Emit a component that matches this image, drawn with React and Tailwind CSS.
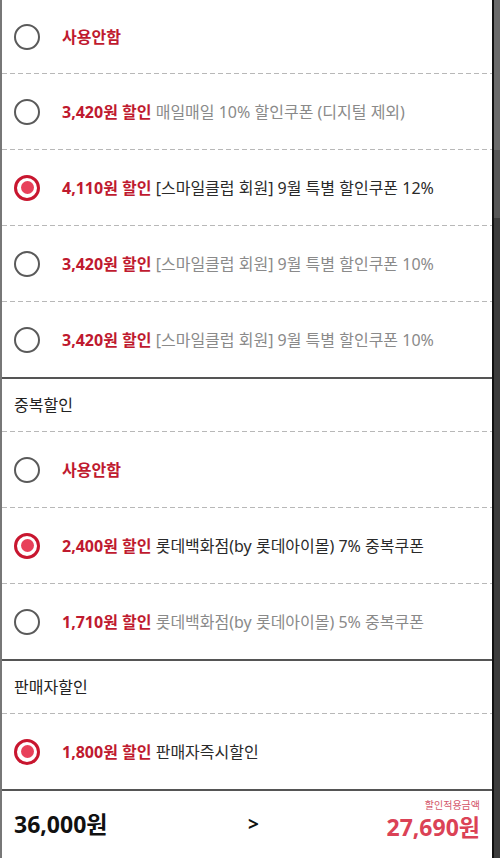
import React from "react";

const FONT = { fontFamily: '"Noto Sans", "Noto Sans CJK KR", sans-serif' };

function Radio({ on }) {
  if (on) {
    return (
      <div className="w-[26px] h-[26px] rounded-full border-[3px] border-[#c8162f] flex items-center justify-center shrink-0">
        <div className="w-[13px] h-[13px] rounded-full bg-[#e8405a]" />
      </div>
    );
  }
  return <div className="w-[26px] h-[26px] rounded-full border-[2.5px] border-[#5a5a5a] shrink-0" />;
}

const dashed =
  "bg-[repeating-linear-gradient(to_right,#b8b8b8_0_5px,transparent_5px_8px)] h-px";

function Row({ on, amount, desc, h = "h-[75px]", last }) {
  return (
    <div>
      <div className={`${h} flex items-center pl-[12px]`}>
        <Radio on={on} />
        <div className="ml-[22px] text-[16px] leading-none whitespace-nowrap">
          {amount ? (
            <>
              <span className="font-bold text-[#bf1a2f]">{amount}원 할인</span>{" "}
              <span className={on ? "text-[#2a2a2a]" : "text-[#8a8a8a]"}>{desc}</span>
            </>
          ) : (
            <span className="font-bold text-[#bf1a2f]">사용안함</span>
          )}
        </div>
      </div>
      {last ? <div className="h-[2px] bg-[#555]" /> : <div className={dashed} />}
    </div>
  );
}

function Header({ title }) {
  return (
    <div>
      <div className="h-[52px] flex items-center pl-[12px] text-[16px] text-[#222]">{title}</div>
      <div className={dashed} />
    </div>
  );
}

export default function App() {
  return (
    <div className="w-[500px] h-[858px] flex bg-white overflow-hidden" style={FONT}>
      <div className="w-[2px] bg-[#777]" />
      <div className="flex-1 flex flex-col">
        <Row h="h-[73px]" />
        <Row amount="3,420" desc="매일매일 10% 할인쿠폰 (디지털 제외)" />
        <Row on amount="4,110" desc="[스마일클럽 회원] 9월 특별 할인쿠폰 12%" />
        <Row amount="3,420" desc="[스마일클럽 회원] 9월 특별 할인쿠폰 10%" />
        <Row amount="3,420" desc="[스마일클럽 회원] 9월 특별 할인쿠폰 10%" last />
        <Header title="중복할인" />
        <Row />
        <Row on amount="2,400" desc="롯데백화점(by 롯데아이몰) 7% 중복쿠폰" />
        <Row amount="1,710" desc="롯데백화점(by 롯데아이몰) 5% 중복쿠폰" last />
        <Header title="판매자할인" />
        <Row on amount="1,800" desc="판매자즉시할인" last />
        <div className="flex-1 flex items-center pl-[12px] pr-[12px]">
          <div className="w-[200px] text-[23px] font-bold text-[#111] leading-none">36,000원</div>
          <div className="flex-1 text-[19px] font-bold text-[#111] leading-none pl-[34px]">&gt;</div>
          <div className="flex flex-col items-end mb-[11px]">
            <div className="text-[10px] text-[#d4566a] leading-none mb-[6px]">할인적용금액</div>
            <div className="text-[23px] font-bold text-[#db4256] leading-none">27,690원</div>
          </div>
        </div>
      </div>
      <div className="w-[2px] bg-[#111]" />
      <div className="w-[6px] flex flex-col">
        <div className="h-[150px] bg-[#6b6b6b]" />
        <div className="h-[68px] bg-[#575757]" />
        <div className="flex-1 bg-[#3c3c3c]" />
      </div>
    </div>
  );
}
